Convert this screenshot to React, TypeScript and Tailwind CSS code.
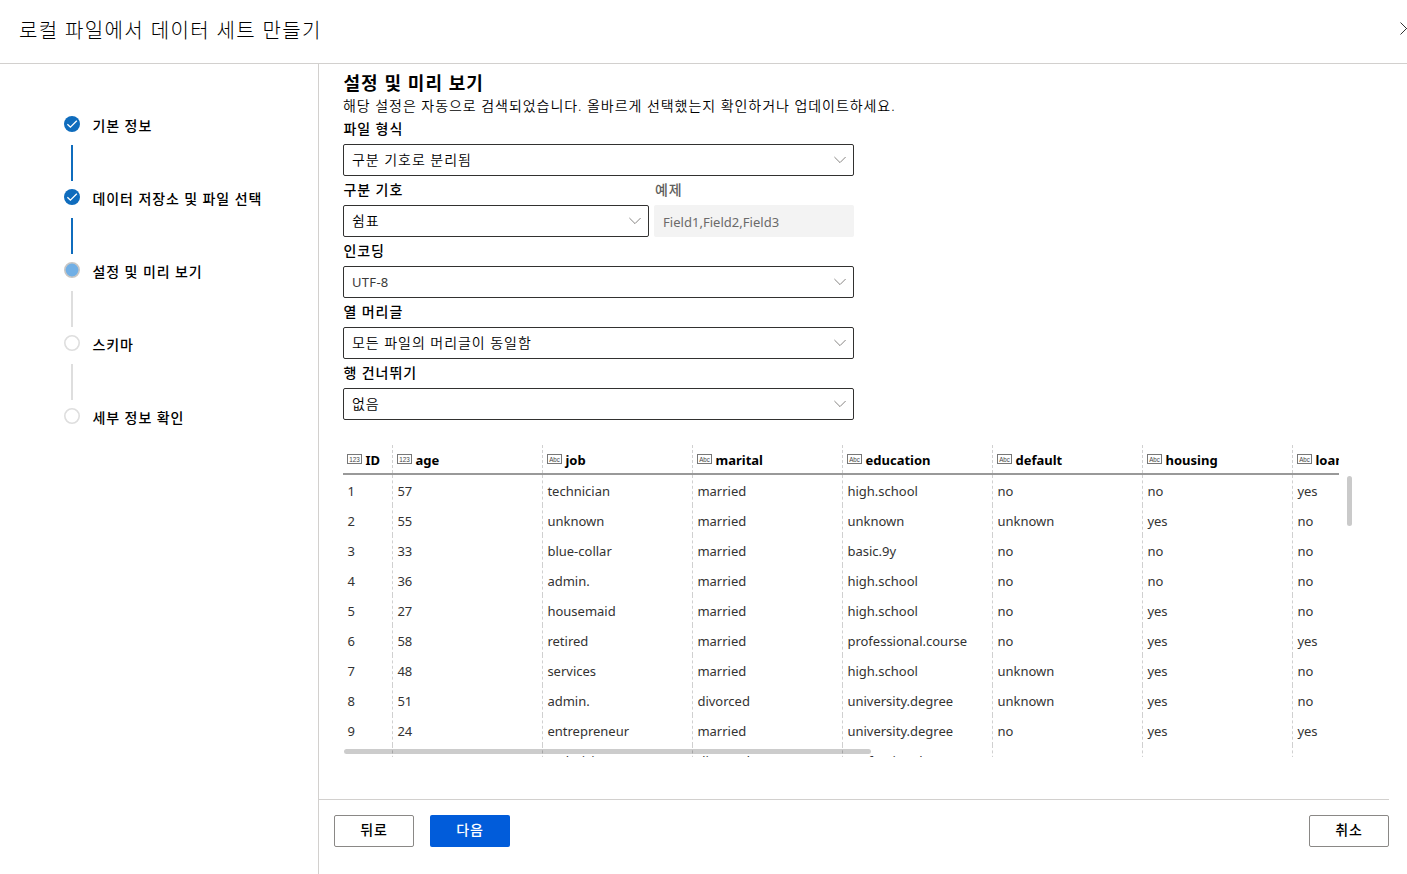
import React from "react";

const columns = ["ID", "age", "job", "marital", "education", "default", "housing", "loan"];

const rows = [
  ["1", "57", "technician", "married", "high.school", "no", "no", "yes"],
  ["2", "55", "unknown", "married", "unknown", "unknown", "yes", "no"],
  ["3", "33", "blue-collar", "married", "basic.9y", "no", "no", "no"],
  ["4", "36", "admin.", "married", "high.school", "no", "no", "no"],
  ["5", "27", "housemaid", "married", "high.school", "no", "yes", "no"],
  ["6", "58", "retired", "married", "professional.course", "no", "yes", "yes"],
  ["7", "48", "services", "married", "high.school", "unknown", "yes", "no"],
  ["8", "51", "admin.", "divorced", "university.degree", "unknown", "yes", "no"],
  ["9", "24", "entrepreneur", "married", "university.degree", "no", "yes", "yes"],
  ["10", "36", "technician", "divorced", "professional.course", "no", "no", "no"],
];

type StepState = "done" | "current" | "todo";

const steps: { label: string; state: StepState }[] = [
  { label: "기본 정보", state: "done" },
  { label: "데이터 저장소 및 파일 선택", state: "done" },
  { label: "설정 및 미리 보기", state: "current" },
  { label: "스키마", state: "todo" },
  { label: "세부 정보 확인", state: "todo" },
];

function StepDot({ state }: { state: StepState }) {
  if (state === "done") {
    return (
      <svg width="16" height="16" viewBox="0 0 16 16" className="block">
        <circle cx="8" cy="8" r="8" fill="#0f6cbd" />
        <path d="M3.4 8.2 6.4 11.2 12.8 4.8" fill="none" stroke="#fff" strokeWidth="1.3" />
      </svg>
    );
  }
  return (
    <svg width="16" height="16" viewBox="0 0 16 16" className="block">
      <circle
        cx="8"
        cy="8"
        r="7.2"
        fill={state === "current" ? "#71afe5" : "#fff"}
        stroke={state === "current" ? "#c8c6c4" : "#dedede"}
        strokeWidth="1.6"
      />
    </svg>
  );
}

function Step({ label, state, last }: { label: string; state: StepState; last: boolean }) {
  return (
    <li className="flex h-[73px] gap-[12.5px]">
      <div className="flex w-4 flex-col items-center">
        <StepDot state={state} />
        {!last && <div className={state === "done" ? "mt-[13px] h-9 w-0.5 bg-[#0f6cbd]" : "mt-[13px] h-9 w-0.5 bg-[#dedede]"} />}
      </div>
      <span className="h-5 text-sm leading-5 font-medium tracking-[0.9px] whitespace-nowrap text-black">{label}</span>
    </li>
  );
}

function Label({ children, muted }: { children: React.ReactNode; muted?: boolean }) {
  return (
    <div className={muted ? "h-[29px] pt-1 pl-px text-sm leading-5 font-medium tracking-[0.9px] text-[#605e5c]" : "h-[29px] pt-1 pl-[0.5px] text-sm leading-5 font-medium tracking-[0.9px] text-black"}>
      {children}
    </div>
  );
}

function Select({ value, latin }: { value: string; latin?: boolean }) {
  return (
    <div className="flex h-8 items-center justify-between rounded-[2px] border border-[#323130] pr-[7px] pl-2">
      <span className={latin ? "text-[13px] leading-5 tracking-[0.3px] text-[#3b3a39]" : "pb-px text-sm leading-5 font-[350] tracking-[0.95px] text-black"}>{value}</span>
      <svg width="12" height="8" viewBox="0 0 12 8">
        <path d="M0.4 1 6 6.6 11.6 1" fill="none" stroke="#797775" strokeWidth="0.9" />
      </svg>
    </div>
  );
}

function Field({ label, value, latin }: { label: string; value: string; latin?: boolean }) {
  return (
    <div>
      <Label>{label}</Label>
      <Select value={value} latin={latin} />
    </div>
  );
}

function TypeIcon({ numeric }: { numeric: boolean }) {
  return (
    <svg width="15" height="10" viewBox="0 0 15 10" className="block shrink-0">
      <rect x="0.5" y="0.5" width="14" height="9" fill="#fff" stroke="#777" />
      <text
        x="2.2"
        y="7.6"
        fontSize="7"
        textLength="10.6"
        lengthAdjust="spacingAndGlyphs"
        fill="#444"
        fontFamily="Liberation Sans, sans-serif"
      >
        {numeric ? "123" : "Abc"}
      </text>
    </svg>
  );
}

const gridCols = "grid w-[1100px] grid-cols-[50px_repeat(7,150px)]";

function DataTable() {
  return (
    <div className="relative mt-[25px] ml-6 h-[312px] w-[1010px]">
      <div className="h-[312px] w-[996px] overflow-hidden">
        <div className={gridCols + " h-[30px] border-b-2 border-[#999] box-border"}>
          {columns.map((name, i) => (
            <div key={name} className={i < 7 ? "flex h-7 border-r border-dashed border-[#d0d0d0] pl-1" : "flex h-7 pl-1"}>
              <div className="pt-[9px]">
                <TypeIcon numeric={i < 2} />
              </div>
              <span className="ml-[3.5px] pt-[5px] text-[13px] leading-5 font-bold text-black">{name}</span>
            </div>
          ))}
        </div>
        <div>
          {rows.map((row) => (
            <div key={row[0]} className={gridCols + " h-[30px]"}>
              {row.map((cell, i) => (
                <div key={i} className={i < 7 ? "h-[30px] border-r border-dashed border-[#d0d0d0] pl-[4.4px]" : "h-[30px] pl-[4.4px]"}>
                  <span className="block pt-1.5 text-[13px] leading-5 text-[#333]">{cell}</span>
                </div>
              ))}
            </div>
          ))}
        </div>
      </div>
      <div className="absolute top-[304px] left-px h-[5px] w-[527px] rounded-full bg-black/20" />
      <div className="absolute top-[31px] left-[1004px] h-[50px] w-[5px] rounded-full bg-[#cacaca]" />
    </div>
  );
}

export default function App() {
  return (
    <div className="flex h-[874px] w-[1407px] flex-col overflow-hidden bg-white font-['Noto_Sans','Noto_Sans_CJK_KR',sans-serif]">
      <header className="flex h-16 shrink-0 justify-between border-b border-[#d2d0ce] pl-[19px]">
        <h1 className="pt-[17px] text-xl leading-7 font-light tracking-[1.36px] whitespace-nowrap text-black">로컬 파일에서 데이터 세트 만들기</h1>
        <div className="mt-[22px] w-[7px] overflow-hidden">
          <svg width="13" height="13" viewBox="0 0 13 13" className="max-w-none">
            <path d="M0.5 0.5 12.5 12.5M12.5 0.5 0.5 12.5" stroke="#333" strokeWidth="1" />
          </svg>
        </div>
      </header>
      <div className="flex min-h-0 flex-1">
        <nav className="w-[319px] shrink-0 border-r border-[#d2d0ce] pt-[52px] pl-16">
          <ol>
            {steps.map((s, i) => (
              <Step key={s.label} label={s.label} state={s.state} last={i === steps.length - 1} />
            ))}
          </ol>
        </nav>
        <main className="flex min-w-0 flex-1 flex-col">
          <div className="h-[735px]">
            <div className="w-[535px] pt-[7px] pl-6">
              <h2 className="h-[25px] pl-[0.5px] text-lg leading-[25px] font-semibold tracking-[1.05px] text-black">설정 및 미리 보기</h2>
              <p className="h-[19px] text-sm leading-5 font-[350] tracking-[0.95px] whitespace-nowrap text-black">
                해당 설정은 자동으로 검색되었습니다. 올바르게 선택했는지 확인하거나 업데이트하세요.
              </p>
              <Field label="파일 형식" value="구분 기호로 분리됨" />
              <div className="grid grid-cols-[306px_200px] gap-[5px]">
                <Field label="구분 기호" value="쉼표" />
                <div>
                  <Label muted>예제</Label>
                  <div className="h-8 rounded-[2px] bg-[#f3f3f3] pt-[7px] pl-[9px] text-[13px] leading-5 tracking-[0.03px] text-[#6b6a69]">Field1,Field2,Field3</div>
                </div>
              </div>
              <Field label="인코딩" value="UTF-8" latin />
              <Field label="열 머리글" value="모든 파일의 머리글이 동일함" />
              <Field label="행 건너뛰기" value="없음" />
            </div>
            <DataTable />
          </div>
          <footer className="mr-[18px] flex border-t border-[#d2d0ce] pt-[15px] pl-[15px] text-sm font-medium tracking-[0.9px]">
            <button className="h-8 w-20 rounded-[2px] border border-[#8a8886] pb-0.5 text-black">뒤로</button>
            <button className="ml-4 h-8 w-20 rounded-[2px] bg-[#015cda] pb-0.5 text-white">다음</button>
            <button className="ml-auto h-8 w-20 rounded-[2px] border border-[#8a8886] pb-0.5 text-black">취소</button>
          </footer>
        </main>
      </div>
    </div>
  );
}
